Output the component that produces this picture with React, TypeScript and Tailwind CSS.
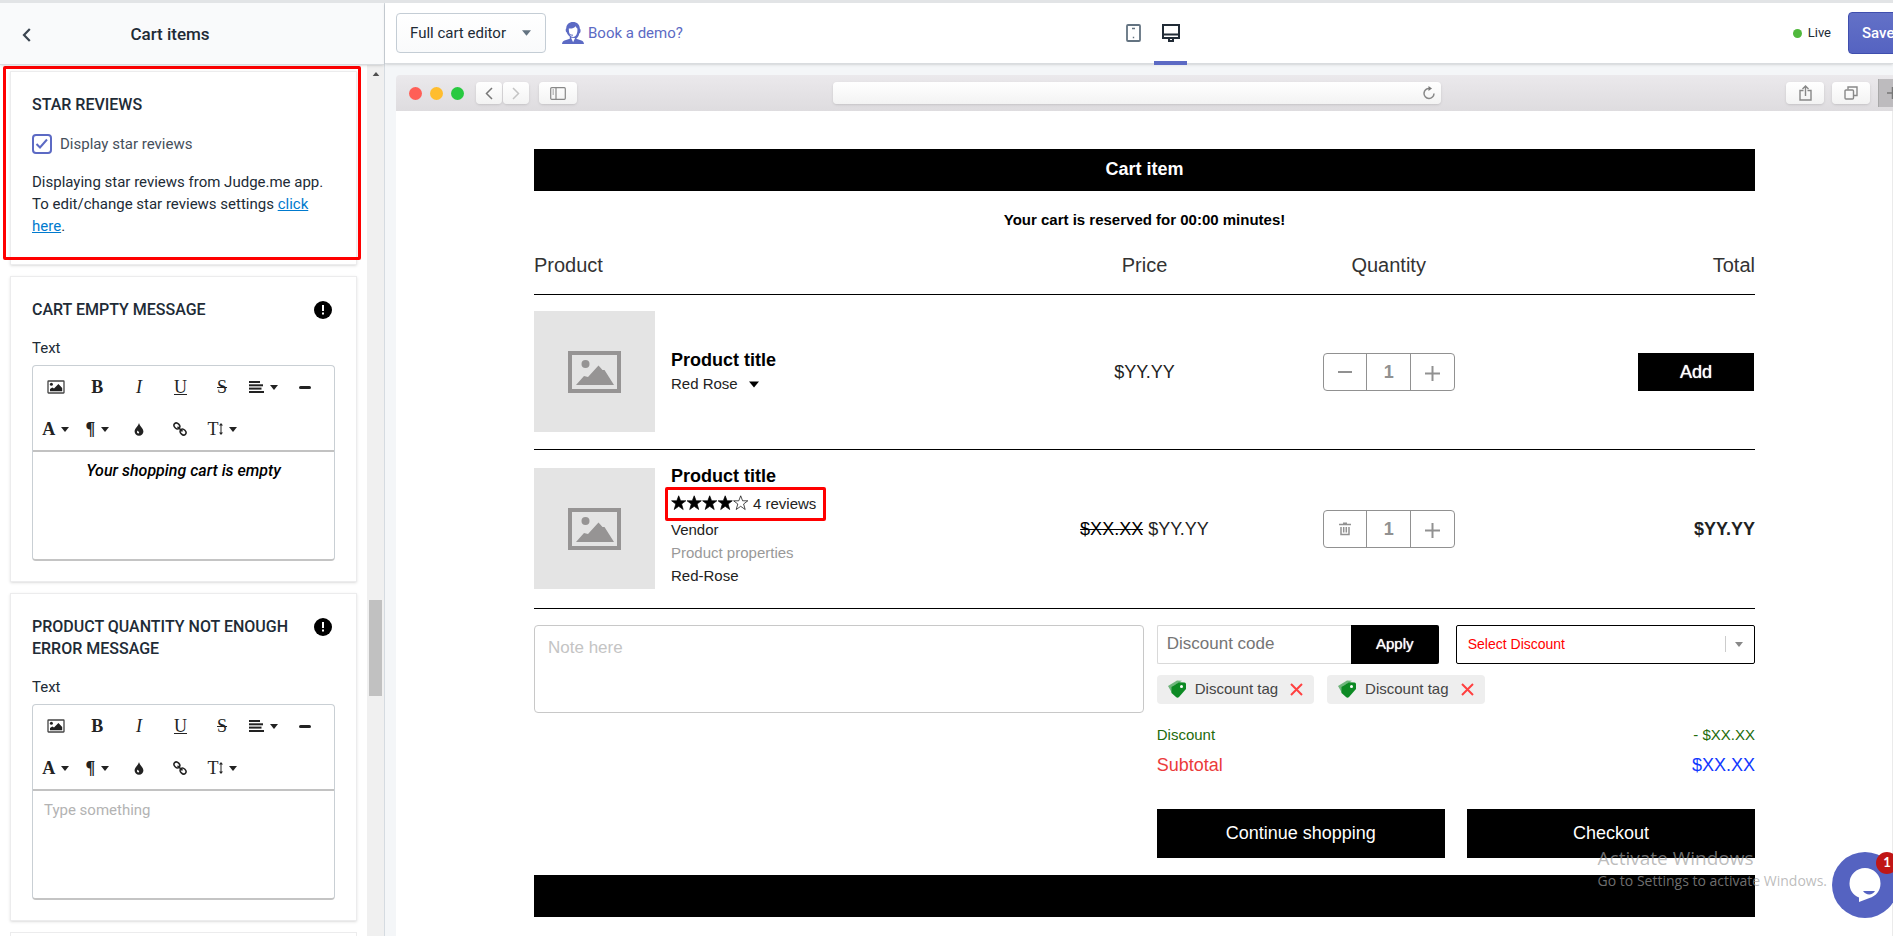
import React, { useState } from 'react';

const REVIEW_STARS = [true, true, true, true, false];

function Caret({ className }: { className: string }) {
  return (
    <svg viewBox="0 0 10 6" className={className} fill="currentColor" aria-hidden="true">
      <path d="M0 0h10L5 6z" />
    </svg>
  );
}

function ImageIcon() {
  return (
    <svg width="18" height="14" viewBox="0 0 18 14" aria-hidden="true">
      <rect x="1" y="1" width="16" height="12" rx="0.5" fill="none" stroke="#444" strokeWidth="1.3" />
      <circle cx="4.4" cy="4.2" r="1.5" fill="#222" />
      <path d="M3 11.3V9l2.3-1.6 1.7 1.2L11.4 4l3.8 4v3.3z" fill="#222" />
    </svg>
  );
}

function AlignIcon() {
  return (
    <svg width="15" height="12" viewBox="0 0 15 12" fill="#222" className="shrink-0" aria-hidden="true">
      <rect width="11" height="2" />
      <rect y="3.3" width="14" height="2" />
      <rect y="6.6" width="12.5" height="2" />
      <rect y="10" width="15" height="2" />
    </svg>
  );
}

function LinkIcon() {
  return (
    <svg width="14" height="14" viewBox="0 0 14 14" fill="none" stroke="#222" strokeWidth="1.5" aria-hidden="true">
      <ellipse cx="3.900" cy="3.900" rx="3.200" ry="2.500" transform="rotate(45 3.900 3.900)" />
      <ellipse cx="10.100" cy="10.100" rx="3.200" ry="2.500" transform="rotate(45 10.100 10.100)" />
      <path d="M4.500 4.800l5 4.600" />
    </svg>
  );
}

function DropIcon() {
  return (
    <svg width="10" height="13" viewBox="0 0 10 13" aria-hidden="true">
      <path d="M5 0C5.6 3 9.4 5.4 9.4 8.6A4.4 4.2 0 0 1 .6 8.6C.6 5.4 4.4 3 5 0z" fill="#222" />
      <path d="M3.6 7.6c-1 1.2-.8 2.6.5 2.8 1 .1 1.3-.9.8-1.5-.5-.5-1-.6-1.3-1.3z" fill="#fff" />
    </svg>
  );
}

function TextSizeIcon() {
  return (
    <span className="flex items-center">
      T
      <svg width="4" height="12" viewBox="0 0 4 12" fill="#222" aria-hidden="true">
        <path d="M2 0l2 2.5H2.5v7H4L2 12 0 9.500h1.500v-7H0z" />
      </svg>
    </span>
  );
}

const TOOLS: { name: string; icon: React.ReactNode; menu?: boolean }[] = [
  { name: 'Insert image', icon: <ImageIcon /> },
  { name: 'Bold', icon: <b>B</b> },
  { name: 'Italic', icon: <i>I</i> },
  { name: 'Underline', icon: <u>U</u> },
  { name: 'Strikethrough', icon: <s>S</s> },
  { name: 'Align', icon: <AlignIcon />, menu: true },
  { name: 'Horizontal line', icon: <span className="block w-3 h-[3px] rounded-sm bg-[#222]" /> },
  { name: 'Font family', icon: <b>A</b>, menu: true },
  { name: 'Paragraph format', icon: <b>¶</b>, menu: true },
  { name: 'Colors', icon: <DropIcon /> },
  { name: 'Insert link', icon: <LinkIcon /> },
  { name: 'Font size', icon: <TextSizeIcon />, menu: true },
];

function Card({ children }: { children: React.ReactNode }) {
  return <section className="shrink-0 border border-[#ececed] bg-white px-[21px] pt-[22px] pb-5 shadow-sm">{children}</section>;
}

function MessageCard({ id, title, value, placeholder }: { id: string; title: string; value?: string; placeholder?: string }) {
  return (
    <Card>
      <div className="flex items-start justify-between gap-2">
        <h2 className="text-base leading-[22px] font-medium">{title}</h2>
        <svg width="18" height="18" viewBox="0 0 18 18" className="mt-0.5 mr-[3px] shrink-0" aria-hidden="true">
          <circle cx="9" cy="9" r="9" />
          <path d="M8 4h2v6H8zM8 11.500h2v2H8z" fill="#fff" />
        </svg>
      </div>
      <label htmlFor={id} className="mt-4 block text-[15px] leading-[22px]">Text</label>
      <div className="mt-1.5 rounded border border-[#c9cfd4] border-b-2 border-b-[#c4c4c4]">
        <div className="grid grid-cols-7 border-b-2 border-[#c2c2c2] pl-0.5 pr-2">
          {TOOLS.map((t) => (
            <button key={t.name} aria-label={t.name} className="flex h-[42px] items-center justify-center gap-1.5 font-['Liberation_Serif',serif] text-lg text-[#222]">
              {t.icon}
              {t.menu && <Caret className="h-[5px] w-2 shrink-0" />}
            </button>
          ))}
        </div>
        <textarea
          id={id}
          defaultValue={value}
          placeholder={placeholder}
          className={`block h-[107px] w-full resize-none px-[11px] py-2 leading-[22px] text-black outline-none placeholder:text-[#b3b3b3] ${value ? 'text-center text-base font-medium italic' : 'text-[15px]'}`}
        />
      </div>
    </Card>
  );
}

function Sidebar() {
  const [showReviews, setShowReviews] = useState(true);

  return (
    <aside className="flex w-[385px] shrink-0 flex-col border-r border-[#d5dbe1] font-[Roboto,sans-serif] text-[#212b36]">
      <header className="z-10 flex h-[62px] shrink-0 items-center border-b border-[#d9dcdf] bg-[#f9fafb] pt-0.5 pl-3 pr-[84px] shadow-sm">
        <button aria-label="Back" className="flex w-7 justify-center">
          <svg width="9" height="14" viewBox="0 0 9 14" fill="none" stroke="#3b4550" strokeWidth="2.2" aria-hidden="true">
            <path d="M7.800 1L2 7l5.800 6" />
          </svg>
        </button>
        <h1 className="flex-1 text-center text-[17px] font-medium">Cart items</h1>
      </header>

      <div className="flex min-h-0 flex-1">
        <div className="flex min-w-0 flex-1 flex-col gap-[11px] overflow-hidden px-2.5 pt-1.5">
          <div className="relative shrink-0">
            <Card>
              <h2 className="text-base leading-[22px] font-medium">STAR REVIEWS</h2>
              <label className="mt-[17px] flex items-center gap-2 text-[15px] leading-[22px] text-[#454f5b]">
                <span className="relative flex">
                  <input
                    type="checkbox"
                    checked={showReviews}
                    onChange={(e) => setShowReviews(e.target.checked)}
                    className="size-5 appearance-none rounded border-2 border-[#5c6ac4] bg-white"
                  />
                  {showReviews && (
                    <svg viewBox="0 0 20 20" className="pointer-events-none absolute inset-0 size-5" fill="none" stroke="#5c6ac4" strokeWidth="2" aria-hidden="true">
                      <path d="M4.500 10l3.500 3.500 7-8" />
                    </svg>
                  )}
                </span>
                Display star reviews
              </label>
              <p className="mt-4 mb-[7px] text-[15px] leading-[22px]">
                Displaying star reviews from Judge.me app. To edit/change star reviews settings{' '}
                <a href="#reviews" className="text-[#007ace] underline">click here</a>.
              </p>
            </Card>
            <div className="pointer-events-none absolute -left-[7px] -right-1 -top-[5px] bottom-[5px] rounded-xs border-3 border-[#ff0000]" />
          </div>
          <MessageCard id="cart-empty" title="CART EMPTY MESSAGE" value="Your shopping cart is empty" />
          <MessageCard id="quantity-error" title="PRODUCT QUANTITY NOT ENOUGH ERROR MESSAGE" placeholder="Type something" />
          <div className="h-10 shrink-0 border border-[#ececed]" />
        </div>
        <div className="flex w-[17px] flex-col items-center bg-[#f0f0f0] pt-[7px]">
          <Caret className="h-1 w-2 rotate-180 text-[#505050]" />
          <div className="mt-[524px] h-24 w-[13px] shrink-0 bg-[#c1c1c1]" />
        </div>
      </div>
    </aside>
  );
}

function TopBar() {
  return (
    <header className="z-10 flex h-[61px] shrink-0 items-center border-b border-[#d9dcdf] bg-white pl-[11px] font-[Roboto,sans-serif] shadow-sm">
      <div className="flex flex-1 items-center gap-4">
        <div className="relative">
          <select aria-label="Editor" className="h-10 w-[150px] appearance-none rounded border border-[#c4cdd5] bg-linear-to-b from-white to-[#f9fafb] pl-[13px] text-[15px] text-[#212b36]">
            <option>Full cart editor</option>
          </select>
          <Caret className="pointer-events-none absolute right-[15px] top-[17px] h-1.5 w-[9px] text-[#637381]" />
        </div>
        <a href="#demo" className="flex items-center gap-1 text-[15px] text-[#5c6ac4]">
          <svg width="22" height="22" viewBox="0 0 22 22" fill="currentColor" aria-hidden="true">
            <path d="M11 0C7 0 4.300 2.600 4.300 6.300c-.9.500-.9 3.600.5 4.300.5 1.800 1.700 3 3 4v2.100L2.500 18.500C1 19 .2 20 0 22h22c-.2-2-1-3-2.500-3.500l-5.300-1.800c1.500-1 2.700-2.600 3-5.100 1.700-.5 1.800-4.300.6-5.100C17.700 2.600 15 0 11 0z" />
            <path d="M6.800 6.500c3 .3 5.500-.5 6.900-2.300.500 1.300 1 1.800 1.700 2.300.4 4.400-1.200 8.500-4.300 8.500-2.700 0-4.300-3.300-4.300-8.500zM9 15.800l2.100 4.400 2-4.200" fill="#fff" />
            <path d="M7 11.500c1 1.500 2.500 1.700 4 1.700" fill="none" stroke="currentColor" />
          </svg>
          Book a demo?
        </a>
      </div>

      <nav className="ml-[15px] flex h-full items-center self-start">
        <button aria-label="Mobile preview" className="flex h-full w-[37px] items-center justify-center">
          <svg width="15" height="18" viewBox="0 0 15 18" fill="none" stroke="#637381" strokeWidth="1.800" aria-hidden="true">
            <rect x="1" y="1" width="13" height="16" rx="1" />
            <path d="M6 4.500h3M6.800 13.500h1.400" strokeWidth="1.500" />
          </svg>
        </button>
        <button aria-label="Desktop preview" className="relative flex h-full w-[37px] items-center justify-center">
          <svg width="18" height="18" viewBox="0 0 18 18" fill="none" stroke="#212b36" strokeWidth="2" aria-hidden="true">
            <path d="M1 1h16v13H1zM1 10.500h16M6 17h6M7 14v3M11 14v3" />
          </svg>
          <span className="absolute inset-x-0.5 -bottom-0.5 h-1 bg-[#5c6ac4]" />
        </button>
      </nav>

      <div className="flex flex-1 items-center justify-end">
        <span className="flex items-center gap-1.5 text-[13px] text-[#212b36]">
          <span className="size-[9px] rounded-full bg-[#50b83c]" />
          Live
        </span>
        <button className="-mr-5 ml-[17px] h-[42px] w-[65px] rounded border border-[#3f4eae] bg-linear-to-b from-[#6371c7] to-[#5563c1] pl-[13px] text-left text-[15px] font-medium text-white">
          Save
        </button>
      </div>
    </header>
  );
}

const chromeButton = 'flex h-[22px] items-center justify-center rounded bg-linear-to-b from-white to-[#f3f3f3] shadow-sm';

function BrowserBar() {
  return (
    <div className="flex h-9 shrink-0 items-center rounded-tl bg-linear-to-b from-[#ebe9ec] to-[#dedcdf] pl-[13px]">
      <div className="flex flex-1 items-center">
        <div className="flex gap-2">
          <span className="size-[13px] rounded-full bg-[#ff5f57]" />
          <span className="size-[13px] rounded-full bg-[#ffbd2e]" />
          <span className="size-[13px] rounded-full bg-[#28c940]" />
        </div>
        <button aria-label="Previous page" className={`${chromeButton} ml-3 w-[26px]`}>
          <svg width="8" height="13" viewBox="0 0 8 13" fill="none" stroke="#777" strokeWidth="1.500" aria-hidden="true"><path d="M7 1L1.500 6.500 7 12" /></svg>
        </button>
        <button aria-label="Next page" className={`${chromeButton} ml-px w-[26px]`}>
          <svg width="8" height="13" viewBox="0 0 8 13" fill="none" stroke="#c4c4c4" strokeWidth="1.500" aria-hidden="true"><path d="M1 1l5.500 5.500L1 12" /></svg>
        </button>
        <button aria-label="Toggle sidebar" className={`${chromeButton} ml-2.5 w-[38px]`}>
          <svg width="16" height="13" viewBox="0 0 16 13" fill="none" stroke="#888" strokeWidth="1.200" aria-hidden="true">
            <rect x="0.700" y="0.700" width="14.600" height="11.600" rx="1" />
            <path d="M6 1v11M2.500 3h1.500M2.500 5h1.500M2.500 7h1.500" />
          </svg>
        </button>
      </div>
      <div className={`${chromeButton} mr-7 w-[41%] !justify-end pr-[5px]`}>
        <svg width="14" height="14" viewBox="0 0 14 14" fill="none" stroke="#888" strokeWidth="1.500" aria-hidden="true">
          <path d="M7.500 2.500A5 5 0 1 0 12 7.500" />
          <path d="M6.500 0l3.500 2.500-3.500 2.600z" fill="#777" stroke="none" />
        </svg>
      </div>
      <div className="flex flex-1 items-center justify-end gap-2">
        <button aria-label="Share" className={`${chromeButton} w-[38px]`}>
          <svg width="13" height="16" viewBox="0 0 13 16" fill="none" stroke="#888" strokeWidth="1.400" aria-hidden="true">
            <path d="M4.500 5.500H1v9.500h11V5.500H8.500M6.500 11V1M3.500 4l3-3 3 3" />
          </svg>
        </button>
        <button aria-label="Show tabs" className={`${chromeButton} w-[38px]`}>
          <svg width="14" height="14" viewBox="0 0 14 14" fill="none" stroke="#888" strokeWidth="1.400" aria-hidden="true">
            <rect x="1" y="4" width="8.500" height="9" rx="1" />
            <path d="M4 3.500V1h9v8.500h-3" />
          </svg>
        </button>
        <button aria-label="New tab" className="flex h-7 w-[15px] items-center justify-end self-end border-l border-[#a8a8a8] bg-[#bdbbbe]">
          <svg width="6" height="12" viewBox="0 0 6 12" stroke="#777" strokeWidth="1.500" aria-hidden="true"><path d="M0 6h6M5.500 0v12" /></svg>
        </button>
      </div>
    </div>
  );
}

function Placeholder() {
  return (
    <div className="flex size-[121px] shrink-0 items-center justify-center bg-[#e4e4e4]">
      <svg width="53" height="42" viewBox="0 0 53 42" fill="#969494" aria-hidden="true">
        <path d="M0 0h53v42H0zM4 4v34h45V4z" fillRule="evenodd" />
        <circle cx="17.500" cy="13" r="4" />
        <path d="M8 34l8-9 4 1 10.500-11.500 4 4.500h2L46 34z" />
      </svg>
    </div>
  );
}

function Quantity({ removable }: { removable?: boolean }) {
  return (
    <div className="mx-auto flex h-[38px] w-[132px] divide-x divide-[#919191] rounded border border-[#919191] text-[#919191]">
      <button aria-label={removable ? 'Remove item' : 'Decrease'} className="flex flex-1 items-center justify-center">
        {removable ? (
          <svg width="12" height="14" viewBox="0 0 12 14" fill="none" stroke="currentColor" strokeWidth="1.500" aria-hidden="true">
            <path d="M0 2.500h12M4 1.200h4M2 5v7.500h8V5M4.700 5v5.500M7.300 5v5.500" />
          </svg>
        ) : (
          <span className="h-0.5 w-3.5 bg-[#919191]" />
        )}
      </button>
      <input aria-label="Quantity" defaultValue="1" className="w-11 text-center text-lg font-bold outline-none" />
      <button aria-label="Increase" className="flex flex-1 items-center justify-center">
        <svg width="15" height="15" viewBox="0 0 15 15" stroke="currentColor" strokeWidth="2" className="mt-1" aria-hidden="true">
          <path d="M0 7.500h15M7.500 0v15" />
        </svg>
      </button>
    </div>
  );
}

function Stars() {
  return (
    <svg width="78" height="16" viewBox="0 0 78 16" stroke="#000" strokeWidth="0.700" aria-hidden="true">
      {REVIEW_STARS.map((filled, i) => (
        <path
          key={i}
          transform={`translate(${i * 15.5} 0)`}
          d="M7.700.8l1.900 5h5.200l-4.200 3.200 1.600 5.500-4.500-3.200-4.500 3.200 1.600-5.500L.6 5.800h5.200z"
          fill={filled ? '#000' : '#fff'}
        />
      ))}
    </svg>
  );
}

function CartTable() {
  return (
    <table className="w-full table-fixed text-lg text-[#222]">
      <thead>
        <tr className="h-[58px] border-b border-black text-xl text-[#333]">
          <th className="w-2/5 text-left font-normal">Product</th>
          <th className="w-1/5 font-normal">Price</th>
          <th className="w-1/5 font-normal">Quantity</th>
          <th className="w-1/5 text-right font-normal">Total</th>
        </tr>
      </thead>
      <tbody>
        <tr className="h-[155px] border-b border-black">
          <td>
            <div className="flex items-center gap-4">
              <Placeholder />
              <div>
                <p className="leading-6 font-bold text-black">Product title</p>
                <div className="relative flex w-[88px]">
                  <select aria-label="Variant" className="h-6 w-full appearance-none text-[15px]">
                    <option>Red Rose</option>
                  </select>
                  <Caret className="pointer-events-none absolute right-0 top-[9px] h-[7px] w-[10px] text-black" />
                </div>
              </div>
            </div>
          </td>
          <td className="text-center">$YY.YY</td>
          <td><Quantity /></td>
          <td>
            <button className="ml-auto mr-px block h-[38px] w-[116px] bg-black text-white [text-shadow:0_0_1px_#fff]">Add</button>
          </td>
        </tr>
        <tr className="h-[159px] border-b border-black">
          <td>
            <div className="flex items-center gap-4">
              <Placeholder />
              <div className="mb-1.5 text-[15px] leading-[23px]">
                <p className="text-lg leading-6 font-bold text-black">Product title</p>
                <div className="relative flex h-[30px] items-center gap-1">
                  <Stars />
                  <span>4 reviews</span>
                  <div className="pointer-events-none absolute -left-1.5 -top-px h-[34px] w-[161px] rounded-xs border-3 border-[#ff0000]" />
                </div>
                <p>Vendor</p>
                <p className="text-[#999]">Product properties</p>
                <p>Red-Rose</p>
              </div>
            </div>
          </td>
          <td className="text-center">
            <s className="text-black">$XX.XX</s> $YY.YY
          </td>
          <td><Quantity removable /></td>
          <td className="text-right font-bold">$YY.YY</td>
        </tr>
      </tbody>
    </table>
  );
}

function DiscountTag() {
  return (
    <span className="flex h-[29px] items-center rounded bg-[#eee] px-[11px] text-[15px] text-[#444]">
      <svg width="18" height="18" viewBox="0 0 18 18" aria-hidden="true">
        <path d="M0 6L9 .5l5 .2-9 5.500L4 13z" fill="#6fb57c" />
        <path d="M3.500 7L11 2.200l5.500.300q1.500.300 1.500 1.800V9L11 17q-1.500 1.500-3 0L3.500 13z" fill="#0d8a24" />
        <circle cx="13.500" cy="6.500" r="1.500" fill="#fff" />
      </svg>
      <span className="ml-[9px]">Discount tag</span>
      <button aria-label="Remove discount" className="ml-3">
        <svg width="13" height="13" viewBox="0 0 13 13" stroke="#ff4040" strokeWidth="2" aria-hidden="true">
          <path d="M1 1l11 11M12 1L1 12" />
        </svg>
      </button>
    </span>
  );
}

function CartFooter() {
  return (
    <div className="mt-4 flex items-start gap-[13px]">
      <textarea
        aria-label="Note"
        placeholder="Note here"
        className="block h-[88px] min-w-0 flex-1 resize-none rounded border border-[#c8c8c8] px-[13px] py-[9px] text-[17px] outline-none placeholder:text-[#c4c4c4]"
      />
      <div className="w-[49%] shrink-0">
        <div className="flex gap-[17px]">
          <div className="flex h-[39px]">
            <input
              aria-label="Discount code"
              placeholder="Discount code"
              className="w-[194px] rounded-l-xs border border-r-0 border-[#d9d9d9] px-[9px] text-[17px] outline-none placeholder:text-[#757575]"
            />
            <button className="w-[88px] rounded-r-xs bg-black text-[15px] text-white [text-shadow:0_0_1px_#fff]">Apply</button>
          </div>
          <div className="relative flex flex-1 items-center">
            <select aria-label="Select Discount" className="h-full w-full appearance-none rounded-xs border border-black px-[11px] text-sm text-[#ff0000]">
              <option>Select Discount</option>
            </select>
            <span className="pointer-events-none absolute right-[29px] h-4 w-px bg-[#ccc]" />
            <Caret className="pointer-events-none absolute right-3 h-[5px] w-2 text-[#888]" />
          </div>
        </div>
        <div className="mt-[11px] flex gap-[13px]">
          <DiscountTag />
          <DiscountTag />
        </div>
        <div className="mt-4 flex justify-between text-[15px] leading-[30px] text-[#236b0c]">
          <span>Discount</span>
          <span>- $XX.XX</span>
        </div>
        <div className="flex justify-between text-lg leading-[30px]">
          <span className="text-[#eb3b3b]">Subtotal</span>
          <span className="text-[#1239ff]">$XX.XX</span>
        </div>
        <div className="mt-[29px] grid grid-cols-2 gap-[22px] text-lg text-white [text-shadow:0_0_1px_#fff]">
          <button className="h-[49px] bg-black">Continue shopping</button>
          <button className="h-[49px] bg-black">Checkout</button>
        </div>
      </div>
    </div>
  );
}

function Preview() {
  return (
    <div className="flex min-h-0 flex-1 flex-col bg-[#f4f6f8] pl-[11px] pt-[11px]">
      <BrowserBar />
      <div className="flex-1 border-r border-[#ebebeb] bg-white pl-[138px] pr-[137px] pt-[38px] font-['Liberation_Sans',Arial,sans-serif]">
        <div className="bg-black pb-0.5 text-center text-lg leading-10 font-bold text-white">Cart item</div>
        <p className="mt-[13px] text-center text-[15px] leading-8 font-bold text-black">Your cart is reserved for 00:00 minutes!</p>
        <CartTable />
        <CartFooter />
        <div className="mt-[17px] h-[42px] bg-black" />
      </div>
    </div>
  );
}

function ChatBubble() {
  return (
    <button aria-label="Open chat" className="absolute bottom-[18px] -right-[5px] flex size-[66px] items-center justify-center rounded-full bg-[#5563c1]">
      <svg width="32" height="36" viewBox="0 0 32 36" aria-hidden="true">
        <path d="M16 1a15.500 15.500 0 0 1 15.500 15.500c0 8-5 12.500-11 14.500l-10.500 4v-4.500C4 28 .5 23 .5 16.500A15.500 15.500 0 0 1 16 1z" fill="#fff" />
        <path d="M14 24h12c-2.500 4.500-9 4.500-12 0z" fill="#5563c1" />
      </svg>
      <span className="absolute top-0 right-0 flex size-[22px] items-center justify-center rounded-full bg-[#c01616] font-[Lato,sans-serif] text-[13px] font-bold text-white">1</span>
    </button>
  );
}

export default function App() {
  return (
    <div className="relative flex h-screen overflow-hidden border-t-[3px] border-[#e2e4e6] bg-white">
      <Sidebar />
      <main className="flex min-w-0 flex-1 flex-col">
        <TopBar />
        <Preview />
      </main>
      <div className="pointer-events-none absolute bottom-11 right-[66px] font-['Open_Sans',sans-serif] text-[#a0a0a0]/70">
        <p className="text-[19px] leading-6">Activate Windows</p>
        <p className="text-sm leading-[22px]">Go to Settings to activate Windows.</p>
      </div>
      <ChatBubble />
    </div>
  );
}
